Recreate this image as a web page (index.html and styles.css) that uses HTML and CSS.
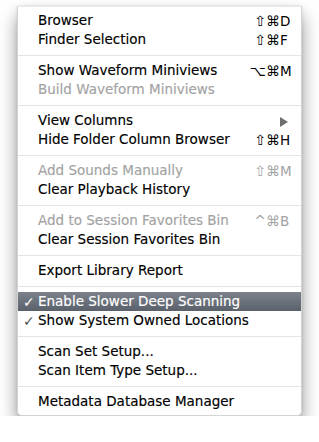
FILE: index.html
```html
<!DOCTYPE html>
<html>
<head>
<meta charset="utf-8">
<link rel="stylesheet" href="styles.css">
</head>
<body>
<div class="menu">
  <div class="item"><span class="check"></span><span class="label">Browser</span><span class="mods">⇧⌘</span><span class="key">D</span></div>
  <div class="item"><span class="check"></span><span class="label">Finder Selection</span><span class="mods">⇧⌘</span><span class="key">F</span></div>
  <div class="sep"></div>
  <div class="item"><span class="check"></span><span class="label">Show Waveform Miniviews</span><span class="mods">⌥⌘</span><span class="key">M</span></div>
  <div class="item disabled"><span class="check"></span><span class="label">Build Waveform Miniviews</span><span class="mods"></span><span class="key"></span></div>
  <div class="sep"></div>
  <div class="item"><span class="check"></span><span class="label">View Columns</span><span class="mods"></span><span class="key"><span class="arrow"></span></span></div>
  <div class="item"><span class="check"></span><span class="label">Hide Folder Column Browser</span><span class="mods">⇧⌘</span><span class="key">H</span></div>
  <div class="sep"></div>
  <div class="item disabled"><span class="check"></span><span class="label">Add Sounds Manually</span><span class="mods">⇧⌘</span><span class="key">M</span></div>
  <div class="item"><span class="check"></span><span class="label">Clear Playback History</span><span class="mods"></span><span class="key"></span></div>
  <div class="sep"></div>
  <div class="item disabled"><span class="check"></span><span class="label">Add to Session Favorites Bin</span><span class="mods">^⌘</span><span class="key">B</span></div>
  <div class="item"><span class="check"></span><span class="label">Clear Session Favorites Bin</span><span class="mods"></span><span class="key"></span></div>
  <div class="sep"></div>
  <div class="item"><span class="check"></span><span class="label">Export Library Report</span><span class="mods"></span><span class="key"></span></div>
  <div class="sep"></div>
  <div class="item selected"><span class="check">✓</span><span class="label">Enable Slower Deep Scanning</span><span class="mods"></span><span class="key"></span></div>
  <div class="item"><span class="check">✓</span><span class="label">Show System Owned Locations</span><span class="mods"></span><span class="key"></span></div>
  <div class="sep"></div>
  <div class="item"><span class="check"></span><span class="label">Scan Set Setup...</span><span class="mods"></span><span class="key"></span></div>
  <div class="item"><span class="check"></span><span class="label">Scan Item Type Setup...</span><span class="mods"></span><span class="key"></span></div>
  <div class="sep"></div>
  <div class="item"><span class="check"></span><span class="label">Metadata Database Manager</span><span class="mods"></span><span class="key"></span></div>
</div>
</body>
</html>
```
FILE: styles.css
```css
html, body {
  margin: 0;
  padding: 0;
  background: #ffffff;
}
body {
  font-family: "DejaVu Sans", "Liberation Sans", sans-serif;
  font-size: 13.5px;
  color: #000;
}
.menu {
  margin: 6px 0 0 17px;
  width: 283px;
  padding: 4px 0 4px;
  background: #ffffff;
  border: 1px solid #d4d4d4;
  border-top-color: #e8e8e8;
  border-radius: 0 0 5px 5px;
  box-shadow: 0 10px 18px rgba(0, 0, 0, 0.42), 0 0 3px rgba(0, 0, 0, 0.12);
}
.item {
  display: grid;
  grid-template-columns: 20px 1fr auto 11px;
  align-items: center;
  height: 19px;
  padding-right: 10px;
  white-space: nowrap;
}
.check {
  font-size: 14px;
  color: #555;
  padding-left: 5px;
}
.label {
  line-height: 19px;
  -webkit-text-stroke: 0.15px currentColor;
}
.mods {
  text-align: right;
  font-size: 14px;
}
.key {
  text-align: left;
}
.disabled {
  color: #a3a3a3;
}
.selected {
  background: linear-gradient(#7c828c, #5b616a);
  color: #fff;
}
.selected .check {
  color: #fff;
}
.arrow {
  display: inline-block;
  width: 0;
  height: 0;
  border-top: 5px solid transparent;
  border-bottom: 5px solid transparent;
  border-left: 8px solid #6e6e6e;
  vertical-align: middle;
}
.sep {
  height: 12px;
  display: flex;
  align-items: center;
}
.sep::before {
  content: "";
  display: block;
  width: 100%;
  height: 1px;
  background: #e4e4e4;
}
```
